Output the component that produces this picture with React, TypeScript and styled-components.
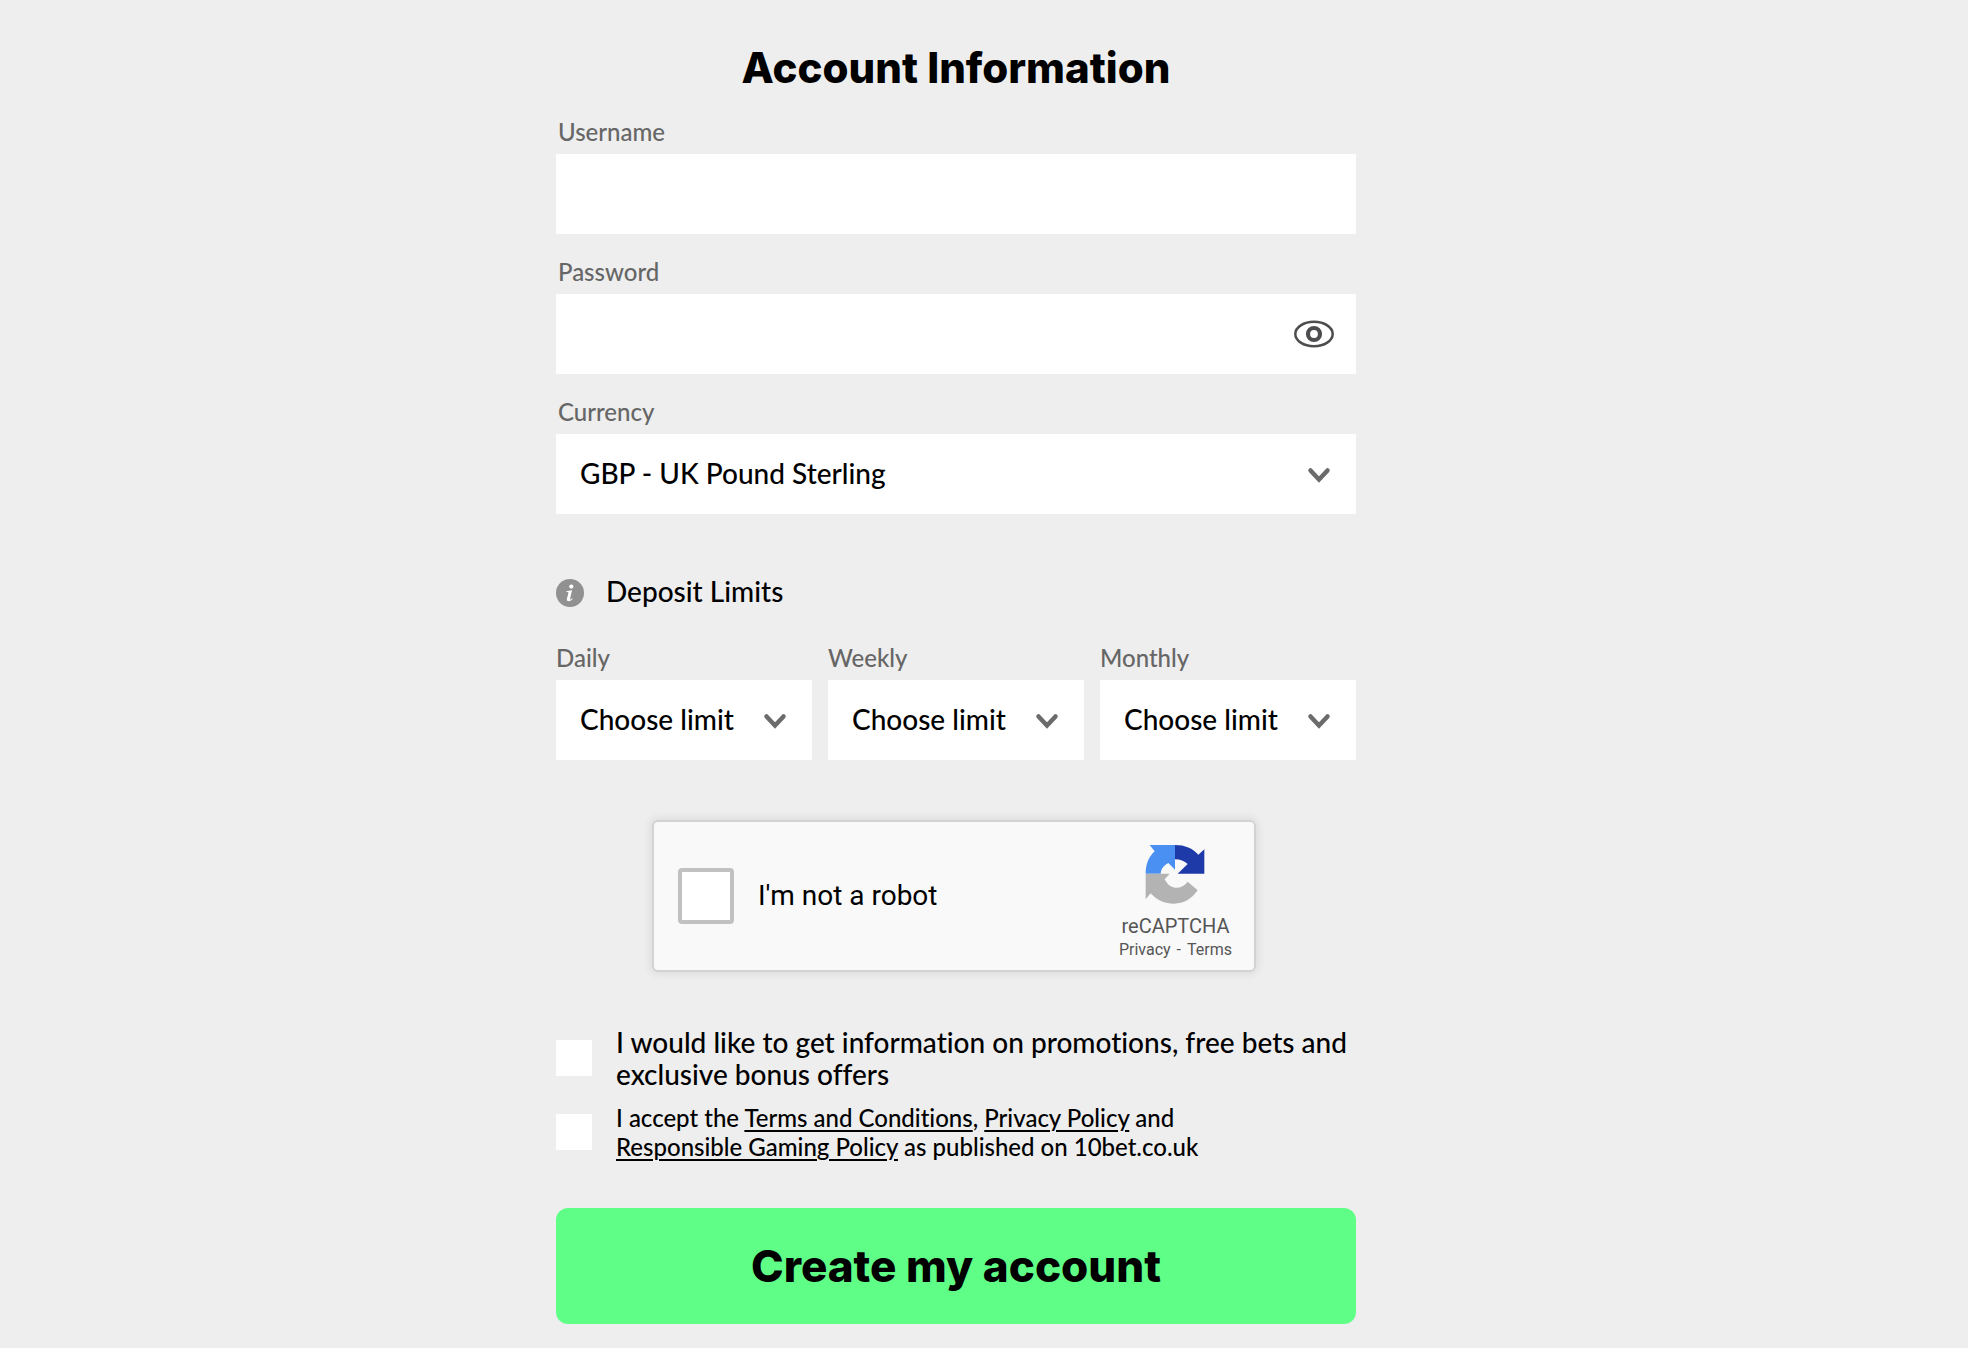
import React, { useState } from "react";
import type { ReactNode } from "react";
import styled, { createGlobalStyle } from "styled-components";

const bodyFont = `Lato, "Open Sans", sans-serif`;
const displayFont = `Inter, Lato, sans-serif`;
const captchaFont = `Roboto, "Liberation Sans", sans-serif`;

const GlobalStyle = createGlobalStyle`
  *, *::before, *::after {
    box-sizing: border-box;
  }

  body {
    margin: 0;
    background: #eeeeee;
    color: #000;
    font-family: ${bodyFont};
    font-size: 28px;
    font-weight: 500;
    font-variant-ligatures: none;
  }
`;

const Page = styled.main`
  display: flex;
  justify-content: center;
  padding: 44px 56px 24px 0;
`;

const Form = styled.form`
  display: flex;
  flex-direction: column;
  width: 100%;
  max-width: 800px;
`;

const Title = styled.h1`
  margin: 0 0 28px;
  font-family: ${displayFont};
  font-size: 42px;
  font-weight: 800;
  line-height: 48px;
  text-align: center;
`;

const Fields = styled.div`
  display: flex;
  flex-direction: column;
  gap: 26px;
`;

const Field = styled.div`
  display: flex;
  flex-direction: column;
  gap: 10px;
  min-width: 0;
`;

const FieldLabel = styled.label<{ $inset?: boolean }>`
  padding-left: ${(p) => (p.$inset ? 2 : 0)}px;
  color: #666;
  font-size: 24px;
  line-height: 24px;
`;

const Control = styled.div`
  position: relative;
  display: flex;
  height: 80px;
  background: #fff;
`;

const TextInput = styled.input`
  width: 100%;
  padding: 0 24px;
  border: 0;
  border-radius: 0;
  background: transparent;
  color: inherit;
  font: inherit;
`;

const Select = styled.select`
  width: 100%;
  padding: 0 48px 2px 24px;
  border: 0;
  border-radius: 0;
  appearance: none;
  background: transparent;
  color: inherit;
  font: inherit;
`;

const RevealButton = styled.button`
  position: absolute;
  inset: 0 22px 0 auto;
  display: flex;
  align-items: center;
  padding: 0;
  border: 0;
  background: none;
  cursor: pointer;
`;

const ChevronSlot = styled.span`
  position: absolute;
  inset: 2px 25px 0 auto;
  display: flex;
  align-items: center;
  pointer-events: none;
`;

const LimitsHeading = styled.div`
  display: flex;
  align-items: flex-end;
  gap: 22px;
  margin: 61px 0 39px;
`;

const LimitsTitle = styled.h2`
  margin: 0;
  font-size: 28px;
  font-weight: 500;
  line-height: 32px;
`;

const Limits = styled.div`
  display: grid;
  grid-template-columns: repeat(3, 1fr);
  gap: 16px;
`;

const CaptchaFrame = styled.div`
  display: flex;
  align-self: center;
  width: 100%;
  max-width: 608px;
  margin: 60px 0 54px;
  padding-right: 4px;
`;

const Captcha = styled.div`
  display: flex;
  flex: 1;
  align-items: center;
  justify-content: space-between;
  height: 152px;
  padding: 0 22px 0 24px;
  border: 2px solid #d3d3d3;
  border-radius: 6px;
  background: #f9f9f9;
  box-shadow: 0 0 8px 2px rgba(0, 0, 0, 0.08);
  font-family: ${captchaFont};
  font-weight: 400;
`;

const CaptchaLabel = styled.label`
  display: flex;
  align-items: center;
  gap: 24px;
  line-height: 34px;
`;

const CaptchaBox = styled.input`
  width: 56px;
  height: 56px;
  margin: 0;
  border: 4px solid #c1c1c1;
  border-radius: 4px;
  appearance: none;
  background: #fff;

  &:checked {
    background: #4a90f2;
  }
`;

const CaptchaBrand = styled.div`
  display: flex;
  flex-direction: column;
  align-items: center;
  padding-top: 14px;
  color: #555;
`;

const BrandName = styled.span`
  margin-top: 10px;
  font-size: 20px;
  line-height: 24px;
`;

const BrandLinks = styled.span`
  display: flex;
  gap: 6px;
  font-size: 16px;
  line-height: 24px;
`;

const BrandLink = styled.a`
  color: inherit;
  text-decoration: none;
`;

const Consents = styled.div`
  display: flex;
  flex-direction: column;
  gap: 13px;
`;

const Consent = styled.div`
  display: flex;
  align-items: center;
  gap: 24px;
`;

const ConsentBox = styled.input`
  flex: none;
  width: 36px;
  height: 36px;
  margin: 0;
  appearance: none;
  background: #fff;

  &:checked {
    background: #5fff87;
  }
`;

const ConsentText = styled.label<{ $small?: boolean }>`
  font-size: ${(p) => (p.$small ? 24 : 28)}px;
  line-height: ${(p) => (p.$small ? 29 : 32)}px;
`;

const PolicyLink = styled.a`
  color: inherit;
  text-decoration: underline;
  text-decoration-thickness: 2px;
  text-underline-offset: 3px;
`;

const Submit = styled.button`
  height: 116px;
  margin-top: 47px;
  padding: 0;
  border: 0;
  border-radius: 12px;
  background: #5fff87;
  color: #000;
  font-family: ${displayFont};
  font-size: 44px;
  font-weight: 800;
  cursor: pointer;
`;

const EyeIcon = () => (
  <svg width="40" height="28" viewBox="0 0 40 28" fill="none" stroke="#4d4d4f" aria-hidden="true">
    <ellipse cx="20" cy="14" rx="18.7" ry="12.2" strokeWidth="2.5" />
    <circle cx="20" cy="14" r="6" strokeWidth="4.2" />
  </svg>
);

const ChevronIcon = () => (
  <svg width="24" height="16" viewBox="0 0 24 16" fill="none" aria-hidden="true">
    <path d="M3.500 3.500 12 12.500l8.500-9" stroke="#6b6b6b" strokeWidth="4.500" strokeLinecap="round" />
  </svg>
);

const InfoIcon = () => (
  <svg width="28" height="28" viewBox="0 0 28 28" aria-hidden="true">
    <circle cx="14" cy="14" r="14" fill="#919191" />
    <circle cx="15.300" cy="7.600" r="2.100" fill="#fff" />
    <path
      d="M10.400 12.200c2-.2 3.600-.6 5.700-.9l-2 8.300c-.2.900.1 1.100.6.900.5-.2 1-.7 1.400-1.200l.6.500c-1.100 1.600-2.400 2.500-4 2.500-1.500 0-2.200-.9-1.800-2.500l1.500-5.800c.2-.8-.3-1-2.100-1Z"
      fill="#fff"
    />
  </svg>
);

const RecaptchaLogo = () => (
  <svg width="60" height="60" viewBox="18 19 180 180" aria-hidden="true">
    <path d="M108 22v74L88 76c-14 7-22 18-23 32H20c0-27 8-49 27-67L32 22Z" fill="#4a90f2" />
    <path d="M108 22c30 0 53 10 70 29l18-16v73h-80l30-29c-10-9-22-14-38-14Z" fill="#1e3aa8" />
    <path
      d="M20 108h72l-15 17c8 15 17 24 31 25 16 1 28-5 38-18l30 26c-18 26-42 40-71 40-28 0-50-9-70-31l-15 18Z"
      fill="#b3b3b3"
    />
  </svg>
);

interface SelectFieldProps {
  id: string;
  label: string;
  inset?: boolean;
  options: string[];
}

const SelectField = ({ id, label, inset, options }: SelectFieldProps) => (
  <Field>
    <FieldLabel htmlFor={id} $inset={inset}>
      {label}
    </FieldLabel>
    <Control>
      <Select id={id}>
        {options.map((option) => (
          <option key={option}>{option}</option>
        ))}
      </Select>
      <ChevronSlot>
        <ChevronIcon />
      </ChevronSlot>
    </Control>
  </Field>
);

interface ConsentRowProps {
  id: string;
  small?: boolean;
  children: ReactNode;
}

const ConsentRow = ({ id, small, children }: ConsentRowProps) => (
  <Consent>
    <ConsentBox id={id} type="checkbox" />
    <ConsentText htmlFor={id} $small={small}>
      {children}
    </ConsentText>
  </Consent>
);

export default function App() {
  const [revealed, setRevealed] = useState(false);

  return (
    <>
      <GlobalStyle />
      <Page>
        <Form onSubmit={(event) => event.preventDefault()}>
          <Title>Account Information</Title>

          <Fields>
            <Field>
              <FieldLabel htmlFor="username" $inset>
                Username
              </FieldLabel>
              <Control>
                <TextInput id="username" type="text" />
              </Control>
            </Field>
            <Field>
              <FieldLabel htmlFor="password" $inset>
                Password
              </FieldLabel>
              <Control>
                <TextInput id="password" type={revealed ? "text" : "password"} />
                <RevealButton
                  type="button"
                  aria-label="Show password"
                  aria-pressed={revealed}
                  onClick={() => setRevealed(!revealed)}
                >
                  <EyeIcon />
                </RevealButton>
              </Control>
            </Field>
            <SelectField id="currency" label="Currency" inset options={["GBP - UK Pound Sterling"]} />
          </Fields>

          <LimitsHeading>
            <InfoIcon />
            <LimitsTitle>Deposit Limits</LimitsTitle>
          </LimitsHeading>
          <Limits>
            {["Daily", "Weekly", "Monthly"].map((period) => (
              <SelectField key={period} id={period.toLowerCase()} label={period} options={["Choose limit"]} />
            ))}
          </Limits>

          <CaptchaFrame>
            <Captcha>
              <CaptchaLabel>
                <CaptchaBox type="checkbox" />
                I'm not a robot
              </CaptchaLabel>
              <CaptchaBrand>
                <RecaptchaLogo />
                <BrandName>reCAPTCHA</BrandName>
                <BrandLinks>
                  <BrandLink href="#privacy">Privacy</BrandLink>
                  <span>-</span>
                  <BrandLink href="#terms">Terms</BrandLink>
                </BrandLinks>
              </CaptchaBrand>
            </Captcha>
          </CaptchaFrame>

          <Consents>
            <ConsentRow id="promotions">
              I would like to get information on promotions, free bets and exclusive bonus offers
            </ConsentRow>
            <ConsentRow id="accept" small>
              I accept the <PolicyLink href="#conditions">Terms and Conditions</PolicyLink>,{" "}
              <PolicyLink href="#privacy-policy">Privacy Policy</PolicyLink> and
              <br />
              <PolicyLink href="#gaming-policy">Responsible Gaming Policy</PolicyLink> as published on 10bet.co.uk
            </ConsentRow>
          </Consents>

          <Submit type="submit">Create my account</Submit>
        </Form>
      </Page>
    </>
  );
}
